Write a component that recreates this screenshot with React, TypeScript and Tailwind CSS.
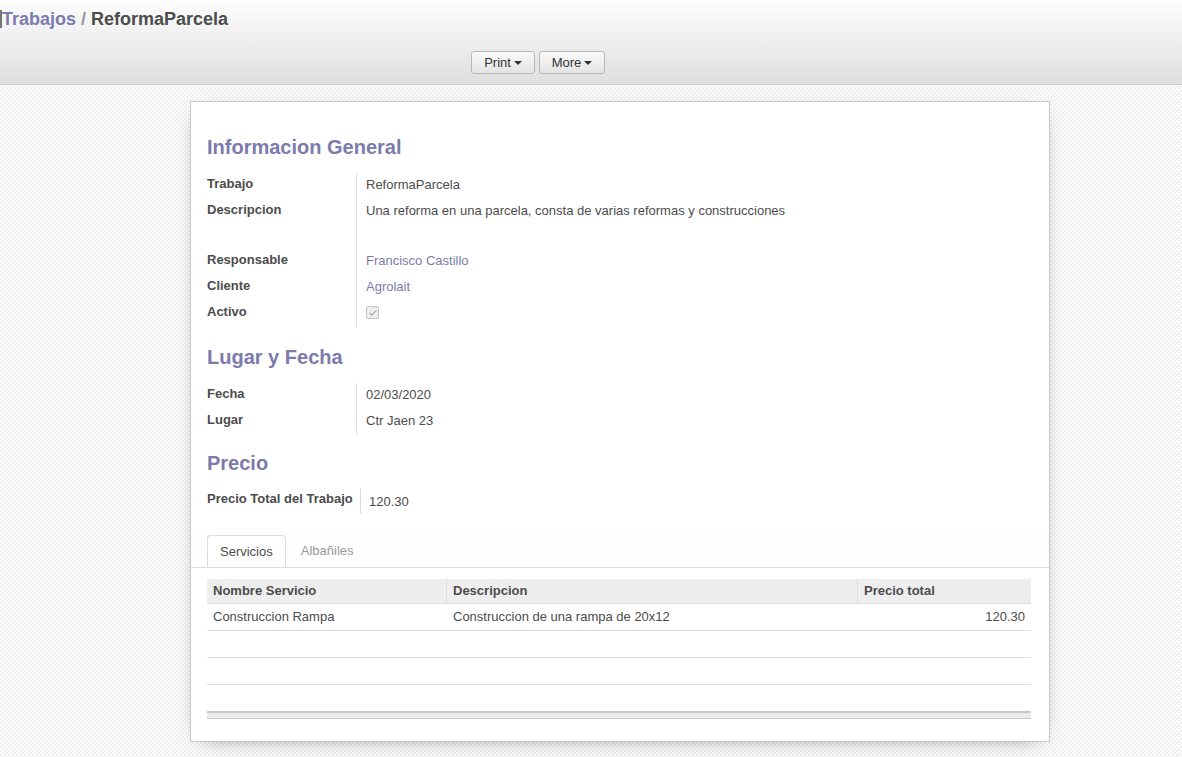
import { Check } from 'lucide-react'

const font = { fontFamily: '"Liberation Sans", Arial, sans-serif' }

function Caret() {
  return <span className="ml-[3px] inline-block h-0 w-0 border-x-[4px] border-t-[4px] border-x-transparent border-t-[#333] align-middle" />
}

function Field({ label, children, tall, link }: { label: string; children?: React.ReactNode; tall?: boolean; link?: boolean }) {
  return (
    <div className={`flex ${tall ? 'h-[50px]' : 'h-[26px]'}`}>
      <div className="w-[150px] shrink-0 border-r border-[#ddd] text-[13px] font-bold leading-[22px] text-[#4c4c4c]">{label}</div>
      <div className={`pl-[9px] pt-[1px] text-[13px] leading-[22px] ${link ? 'text-[#7c7bad]' : 'text-[#4c4c4c]'}`}>{children}</div>
    </div>
  )
}

function Heading({ children }: { children: React.ReactNode }) {
  return <h2 className="text-[20px] font-bold leading-[28px] text-[#7c7bad]">{children}</h2>
}

export default function App() {
  return (
    <div style={font} className="min-h-[757px] bg-[#f7f7f7] bg-[image:repeating-conic-gradient(#f0f0f0_0%_25%,#fcfcfc_0%_50%)] bg-[length:4px_4px] text-[#4c4c4c]">
      {/* Control panel */}
      <div className="h-[85px] border-b border-[#cfcfcf] bg-gradient-to-b from-[#fdfdfd] to-[#dfdfdf]">
        <div className="flex items-center pt-[7px]">
          <span className="h-[18px] w-[2px] bg-[#777]" />
          <div className="text-[18px] font-bold leading-[24px]">
            <span className="text-[#7c7bad]">Trabajos</span>
            <span className="text-[#999]"> / </span>
            <span className="text-[#4c4c4c]">ReformaParcela</span>
          </div>
        </div>
        <div className="flex gap-[4px] pl-[471px] pt-[20px]">
          <button className="flex h-[23px] w-[64px] items-center justify-center rounded-[3px] border border-[#b8b8b8] bg-gradient-to-b from-[#fafafa] to-[#e4e4e4] text-[13px] text-[#333]">
            Print<Caret />
          </button>
          <button className="flex h-[23px] w-[66px] items-center justify-center rounded-[3px] border border-[#b8b8b8] bg-gradient-to-b from-[#fafafa] to-[#e4e4e4] text-[13px] text-[#333]">
            More<Caret />
          </button>
        </div>
      </div>

      {/* Sheet */}
      <div className="ml-[190px] mt-[16px] w-[860px] border border-[#c8c8c8] bg-white shadow-[0_5px_20px_-12px_rgba(0,0,0,0.6)]">
        <div className="px-[16px] pt-[31px]">
          <Heading>Informacion General</Heading>
          <div className="mt-[12px]">
            <Field label="Trabajo">ReformaParcela</Field>
            <Field label="Descripcion" tall>Una reforma en una parcela, consta de varias reformas y construcciones</Field>
            <Field label="Responsable" link>Francisco Castillo</Field>
            <Field label="Cliente" link>Agrolait</Field>
            <Field label="Activo">
              <span className="mt-[4px] flex h-[13px] w-[13px] items-center justify-center rounded-[2px] border border-[#c4c4c4] bg-[#ececec]">
                <Check size={10} strokeWidth={2.5} className="text-[#a0a0a0]" />
              </span>
            </Field>
          </div>

          <div className="mt-[16px]">
            <Heading>Lugar y Fecha</Heading>
          </div>
          <div className="mt-[12px]">
            <Field label="Fecha">02/03/2020</Field>
            <Field label="Lugar">Ctr Jaen 23</Field>
          </div>

          <div className="mt-[14px]">
            <Heading>Precio</Heading>
          </div>
          <div className="mt-[11px] flex h-[26px]">
            <div className="w-[154px] shrink-0 border-r border-[#ddd] text-[13px] font-bold leading-[22px]">Precio Total del Trabajo</div>
            <div className="pl-[8px] pt-[3px] text-[13px] leading-[22px]">120.30</div>
          </div>
        </div>

        {/* Notebook */}
        <div className="mt-[21px] flex border-b border-[#ddd] bg-gradient-to-b from-[#fdfdfd] to-white pl-[16px]">
          <div className="-mb-px h-[32px] rounded-t-[4px] border border-b-white border-[#ddd] bg-white px-[12px] text-[13px] leading-[31px] text-[#4c4c4c]">Servicios</div>
          <div className="ml-[2px] h-[32px] px-[13px] text-[13px] leading-[31px] text-[#999]">Albañiles</div>
        </div>

        <div className="px-[16px] pb-[22px] pr-[18px] pt-[11px]">
          <div className="flex h-[25px] border-b border-[#ddd] bg-[#eee] text-[13px] font-bold leading-[24px]">
            <div className="w-[239px] px-[6px]">Nombre Servicio</div>
            <div className="w-[411px] border-l border-[#ddd] px-[6px]">Descripcion</div>
            <div className="flex-1 border-l border-[#ddd] px-[6px]">Precio total</div>
          </div>
          <div className="flex h-[27px] border-b border-[#ddd] text-[13px] leading-[26px]">
            <div className="w-[239px] px-[6px]">Construccion Rampa</div>
            <div className="w-[411px] px-[7px]">Construccion de una rampa de 20x12</div>
            <div className="flex-1 px-[6px] text-right">120.30</div>
          </div>
          <div className="h-[27px] border-b border-[#ddd]" />
          <div className="h-[27px] border-b border-[#ddd]" />
          <div className="h-[26px]" />
          <div className="h-[8px] border-b border-t-2 border-b-[#ccc] border-t-[#c8c8c8] bg-[#ececec]" />
        </div>
      </div>
    </div>
  )
}
